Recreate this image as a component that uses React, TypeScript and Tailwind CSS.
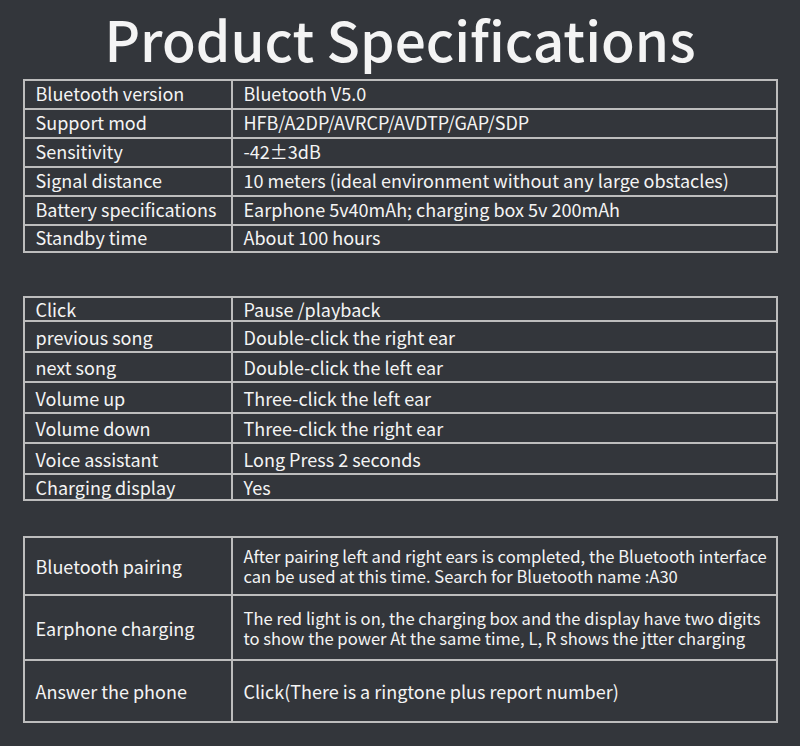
import React from "react";

type Row = { a: string; b: string[]; h: string };

const t1: Row[] = [
  { a: "Bluetooth version", b: ["Bluetooth V5.0"], h: "h-[27px]" },
  { a: "Support mod", b: ["HFB/A2DP/AVRCP/AVDTP/GAP/SDP"], h: "h-[29px]" },
  { a: "Sensitivity", b: ["-42±3dB"], h: "h-[29px]" },
  { a: "Signal distance", b: ["10 meters (ideal environment without any large obstacles)"], h: "h-[29px]" },
  { a: "Battery specifications", b: ["Earphone 5v40mAh; charging box 5v 200mAh"], h: "h-[29px]" },
  { a: "Standby time", b: ["About 100 hours"], h: "h-[27px]" },
];
const t2: Row[] = [
  { a: "Click", b: ["Pause /playback"], h: "h-[22px]" },
  { a: "previous song", b: ["Double-click the right ear"], h: "h-[31px]" },
  { a: "next song", b: ["Double-click the left ear"], h: "h-[30px]" },
  { a: "Volume up", b: ["Three-click the left ear"], h: "h-[31px]" },
  { a: "Volume down", b: ["Three-click the right ear"], h: "h-[30px]" },
  { a: "Voice assistant", b: ["Long Press 2 seconds"], h: "h-[31px]" },
  { a: "Charging display", b: ["Yes"], h: "h-[26px]" },
];
const t3: Row[] = [
  {
    a: "Bluetooth pairing",
    b: [
      "After pairing left and right ears is completed, the Bluetooth interface",
      "can be used at this time. Search for Bluetooth name :A30",
    ],
    h: "h-[56px]",
  },
  {
    a: "Earphone charging",
    b: [
      "The red light is on, the charging box and the display have two digits",
      "to show the power At the same time, L, R shows the jtter charging",
    ],
    h: "h-[65px]",
  },
  { a: "Answer the phone", b: ["Click(There is a ringtone plus report number)"], h: "h-[62px]" },
];

function Table({ rows, small, lift }: { rows: Row[]; small?: boolean; lift?: boolean }) {
  const pad = lift ? "pb-[4px]" : "";
  return (
    <div className="w-[755px] border-2 border-[#bdbdbd] flex flex-col">
      {rows.map((r, i) => (
        <div key={r.a} className={`flex ${r.h} ${i > 0 ? "border-t-2 border-[#bdbdbd]" : ""}`}>
          <div
            className={`w-[208px] shrink-0 border-r-2 border-[#bdbdbd] pl-[11px] flex items-center whitespace-nowrap ${pad}`}
          >
            {r.a}
          </div>
          <div
            className={`flex-1 pl-[11px] flex flex-col justify-center whitespace-nowrap ${pad} ${
              small && r.b.length > 1 ? "text-[16.6px] leading-[20px]" : ""
            }`}
          >
            {r.b.map((l, j) => (
              <div key={j}>{l}</div>
            ))}
          </div>
        </div>
      ))}
    </div>
  );
}

export default function App() {
  return (
    <div
      className="w-[800px] h-[746px] bg-[#33363b] text-[#f4f4f4] flex flex-col items-center"
      style={{ fontFamily: '"Noto Sans CJK SC", "Noto Sans", sans-serif' }}
    >
      <h1 className="text-[55px] leading-[76px] h-[79px] font-medium">Product Specifications</h1>
      <div className="text-[18px] leading-[22px] flex flex-col">
        <Table rows={t1} lift />
        <div className="h-[43px]" />
        <Table rows={t2} />
        <div className="h-[35px]" />
        <Table rows={t3} small />
      </div>
    </div>
  );
}
